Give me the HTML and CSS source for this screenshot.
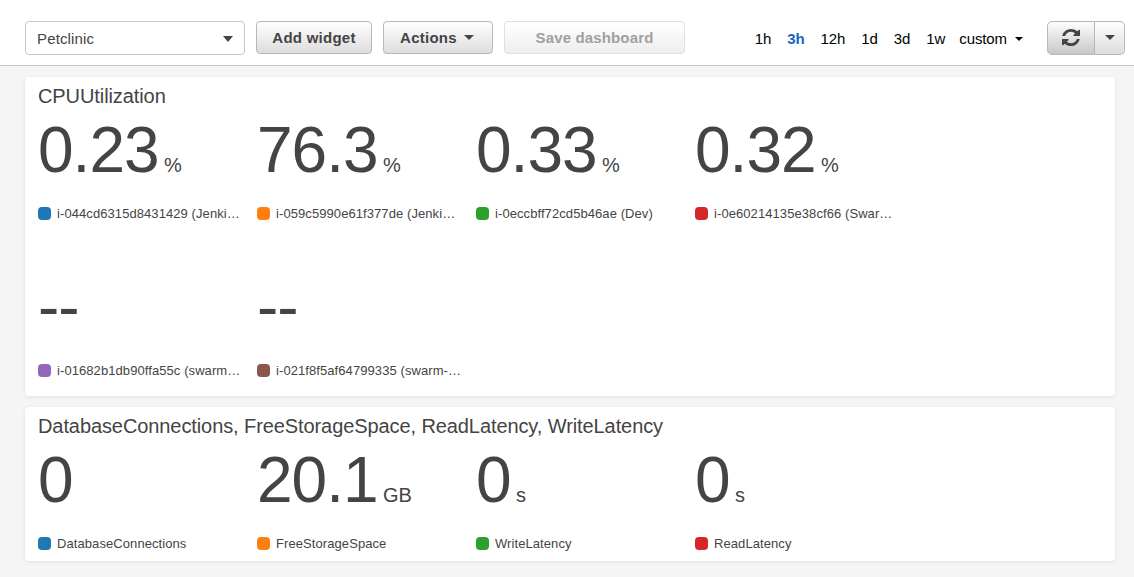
FILE: index.html
```
<!DOCTYPE html>
<html lang="en">
<head>
<meta charset="utf-8">
<title>Petclinic dashboard</title>
<link rel="stylesheet" href="styles.css">
</head>
<body>
<header class="toolbar">
  <div class="select"><span>Petclinic</span><i class="caret caret-select"></i></div>
  <button class="btn btn-add">Add widget</button>
  <button class="btn btn-actions">Actions<i class="caret caret-actions"></i></button>
  <button class="btn btn-save" disabled>Save dashboard</button>
  <nav class="ranges">
    <a>1h</a><a class="active">3h</a><a>12h</a><a>1d</a><a>3d</a><a>1w</a><a class="custom">custom<i class="caret caret-small"></i></a>
  </nav>
  <div class="split">
    <button class="split-main" aria-label="Refresh"><svg class="refresh" viewBox="0 0 1536 1536" preserveAspectRatio="none"><path d="M1511 928q0 5-1 7-64 268-268 434.500t-478 166.500q-146 0-282.500-55t-243.500-157l-129 129q-19 19-45 19t-45-19-19-45v-448q0-26 19-45t45-19h448q26 0 45 19t19 45-19 45l-137 137q71 66 161 102t187 36q134 0 250-65t186-179q11-17 53-117 8-23 30-23h192q13 0 22.500 9.500t9.500 22.500zM1536 128v448q0 26-19 45t-45 19h-448q-26 0-45-19t-19-45 19-45l138-138q-148-137-349-137-134 0-250 65t-186 179q-11 17-53 117-8 23-30 23h-199q-13 0-22.500-9.500t-9.500-22.500v-7q65-268 270-434.500t480-166.500q146 0 284 55.500t245 156.500l130-129q19-19 45-19t45 19 19 45z"/></svg></button>
    <button class="split-more" aria-label="Refresh options"><i class="caret caret-split"></i></button>
  </div>
</header>
<main class="board">
  <section class="card card-cpu">
    <h2>CPUUtilization</h2>
    <div class="metrics">
      <div class="metric"><div class="value">0.23<small> %</small></div><div class="label"><i class="swatch blue"></i>i-044cd6315d8431429 (Jenki…</div></div>
      <div class="metric"><div class="value">76.3<small> %</small></div><div class="label"><i class="swatch orange"></i>i-059c5990e61f377de (Jenki…</div></div>
      <div class="metric"><div class="value">0.33<small> %</small></div><div class="label"><i class="swatch green"></i>i-0eccbff72cd5b46ae (Dev)</div></div>
      <div class="metric"><div class="value">0.32<small> %</small></div><div class="label"><i class="swatch red"></i>i-0e60214135e38cf66 (Swar…</div></div>
      <div class="metric"><div class="value">--</div><div class="label"><i class="swatch purple"></i>i-01682b1db90ffa55c (swarm…</div></div>
      <div class="metric"><div class="value">--</div><div class="label"><i class="swatch brown"></i>i-021f8f5af64799335 (swarm-…</div></div>
    </div>
  </section>
  <section class="card card-db">
    <h2>DatabaseConnections, FreeStorageSpace, ReadLatency, WriteLatency</h2>
    <div class="metrics">
      <div class="metric"><div class="value">0</div><div class="label"><i class="swatch blue"></i>DatabaseConnections</div></div>
      <div class="metric"><div class="value">20.1<small> GB</small></div><div class="label"><i class="swatch orange"></i>FreeStorageSpace</div></div>
      <div class="metric"><div class="value">0<small> s</small></div><div class="label"><i class="swatch green"></i>WriteLatency</div></div>
      <div class="metric"><div class="value">0<small> s</small></div><div class="label"><i class="swatch red"></i>ReadLatency</div></div>
    </div>
  </section>
</main>
</body>
</html>
```
FILE: styles.css
```
* { box-sizing: border-box; }
body {
  margin: 0;
  height: 577px;
  overflow: hidden;
  background: #f5f5f5;
  color: #444;
  font-family: "Liberation Sans", Arial, sans-serif;
}
button { font-family: inherit; margin: 0; padding: 0; }
.toolbar {
  height: 66px;
  display: flex;
  align-items: flex-start;
  padding: 21px 9px 0 25px;
  background: #fff;
  border-bottom: 1px solid #c8c8c8;
}
.select {
  width: 220px;
  height: 34px;
  margin-right: 11px;
  padding: 1px 11px 0;
  display: flex;
  align-items: center;
  justify-content: space-between;
  border: 1px solid #c8c8c8;
  border-radius: 4px;
  font-size: 15px;
  letter-spacing: 0.15px;
}
.caret {
  display: inline-block;
  width: 0;
  height: 0;
  border-style: solid;
  border-color: #444 transparent transparent;
}
.caret-select { border-width: 6px 5.5px 0; }
.caret-actions { border-width: 5px 5px 0; margin-left: 7px; margin-bottom: 1px; }
.caret-small { border-width: 4px 4px 0; border-top-color: #000; margin-left: 8px; margin-top: 2px; }
.caret-split { border-width: 5px 5px 0; margin-bottom: 2px; }
.btn {
  height: 33px;
  margin-right: 11px;
  display: flex;
  align-items: center;
  justify-content: center;
  border: 1px solid #b7b7b7;
  border-radius: 4px;
  background: linear-gradient(#fff, #ddd);
  color: #444;
  font-size: 15px;
  font-weight: bold;
  letter-spacing: 0.25px;
}
.btn-add { width: 116px; }
.btn-actions { width: 110px; padding-right: 2px; }
.btn-save {
  width: 181px;
  margin-right: 0;
  border-color: #e0e0e0;
  background: linear-gradient(#fff, #eee);
  color: #a0a0a0;
  letter-spacing: 0.15px;
}
.ranges {
  margin-left: auto;
  margin-right: 24px;
  height: 34px;
  display: flex;
  align-items: center;
  gap: 16px;
  color: #000;
  font-size: 15px;
}
.ranges a { letter-spacing: -0.1px; }
.ranges .active { color: #1b62c4; font-weight: bold; }
.ranges .custom { display: flex; align-items: center; margin-left: -2px; }
.split { display: flex; width: 78px; height: 34px; }
.split button {
  display: flex;
  align-items: center;
  justify-content: center;
  border: 1px solid #b7b7b7;
}
.split .split-main {
  width: 48px;
  border-radius: 5px 0 0 5px;
  background: linear-gradient(#fdfdfd, #c8c8c8);
}
.split .split-more {
  width: 30px;
  border-left: 0;
  border-radius: 0 5px 5px 0;
  background: linear-gradient(#fff, #ddd);
}
.refresh { width: 18px; height: 17px; margin-bottom: 1px; fill: #444; }
.board { padding: 11px 19px 0 25px; }
.card {
  margin-bottom: 11px;
  padding: 8px 13px 0;
  background: #fff;
  border-radius: 4px;
  box-shadow: 0 1px 4px rgba(0, 0, 0, 0.08);
}
.card-cpu { height: 319px; }
.card-db { height: 154px; }
h2 { margin: 0; font-size: 20px; font-weight: normal; line-height: 23px; letter-spacing: -0.09px; }
.metrics {
  display: grid;
  grid-template-columns: repeat(4, 219px);
  grid-auto-rows: 157px;
}
.value { height: 98px; padding-top: 7px; font-size: 64px; line-height: 71px; letter-spacing: -1px; white-space: nowrap; }
.value small { font-size: 20px; letter-spacing: -0.1px; }
.label {
  height: 15px;
  display: flex;
  align-items: center;
  font-size: 13px;
  line-height: 15px;
  letter-spacing: 0.08px;
  white-space: nowrap;
}
.swatch { width: 13px; height: 13px; margin-right: 6px; border-radius: 4px; }
.blue { background: #1f77b4; }
.orange { background: #ff7f0e; }
.green { background: #2ca02c; }
.red { background: #d62728; }
.purple { background: #9467bd; }
.brown { background: #8c564b; }
```
